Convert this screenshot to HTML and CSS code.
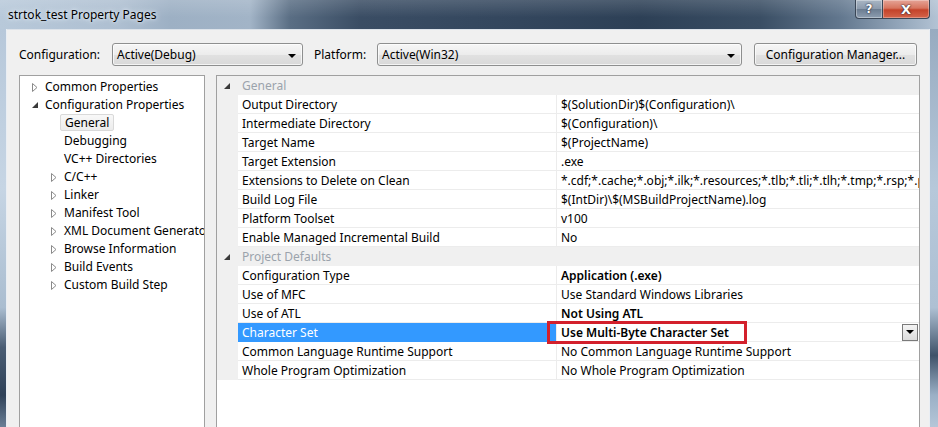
FILE: index.html
```html
<!DOCTYPE html>
<html>
<head>
<meta charset="utf-8">
<title>strtok_test Property Pages</title>
<link rel="stylesheet" href="styles.css">
</head>
<body>
<div class="window">
  <div class="titlebar">
    <span class="title">strtok_test Property Pages</span>
    <div class="caption">
      <span class="cap help">?</span>
      <span class="cap close">X</span>
    </div>
  </div>
  <div class="frame">
    <div class="edge edge-left"></div>
    <div class="client">
      <div class="config-row">
        <span class="lbl lbl-config">Configuration:</span>
        <div class="combo combo-config"><span>Active(Debug)</span><i class="dd"></i></div>
        <span class="lbl lbl-platform">Platform:</span>
        <div class="combo combo-platform"><span>Active(Win32)</span><i class="dd"></i></div>
        <div class="btn">Configuration Manager...</div>
      </div>
      <div class="panels">
        <div class="tree">
          <div class="node l1"><i class="tw"><svg width="6" height="9" viewBox="0 0 6 9"><polygon points="0.5,0.5 5,4.5 0.5,8.5" fill="#fff" stroke="#8a8a8a" stroke-width="1"/></svg></i><span>Common Properties</span></div>
          <div class="node l1"><i class="tw"><svg width="6" height="6" viewBox="0 0 6 6"><polygon points="6,0 6,6 0,6" fill="#3a3a3a"/></svg></i><span>Configuration Properties</span></div>
          <div class="node l2"><i class="tw"></i><span class="sel">General</span></div>
          <div class="node l2"><i class="tw"></i><span>Debugging</span></div>
          <div class="node l2"><i class="tw"></i><span>VC++ Directories</span></div>
          <div class="node l2"><i class="tw"><svg width="6" height="9" viewBox="0 0 6 9"><polygon points="0.5,0.5 5,4.5 0.5,8.5" fill="#fff" stroke="#8a8a8a" stroke-width="1"/></svg></i><span>C/C++</span></div>
          <div class="node l2"><i class="tw"><svg width="6" height="9" viewBox="0 0 6 9"><polygon points="0.5,0.5 5,4.5 0.5,8.5" fill="#fff" stroke="#8a8a8a" stroke-width="1"/></svg></i><span>Linker</span></div>
          <div class="node l2"><i class="tw"><svg width="6" height="9" viewBox="0 0 6 9"><polygon points="0.5,0.5 5,4.5 0.5,8.5" fill="#fff" stroke="#8a8a8a" stroke-width="1"/></svg></i><span>Manifest Tool</span></div>
          <div class="node l2"><i class="tw"><svg width="6" height="9" viewBox="0 0 6 9"><polygon points="0.5,0.5 5,4.5 0.5,8.5" fill="#fff" stroke="#8a8a8a" stroke-width="1"/></svg></i><span>XML Document Generator</span></div>
          <div class="node l2"><i class="tw"><svg width="6" height="9" viewBox="0 0 6 9"><polygon points="0.5,0.5 5,4.5 0.5,8.5" fill="#fff" stroke="#8a8a8a" stroke-width="1"/></svg></i><span>Browse Information</span></div>
          <div class="node l2"><i class="tw"><svg width="6" height="9" viewBox="0 0 6 9"><polygon points="0.5,0.5 5,4.5 0.5,8.5" fill="#fff" stroke="#8a8a8a" stroke-width="1"/></svg></i><span>Build Events</span></div>
          <div class="node l2"><i class="tw"><svg width="6" height="9" viewBox="0 0 6 9"><polygon points="0.5,0.5 5,4.5 0.5,8.5" fill="#fff" stroke="#8a8a8a" stroke-width="1"/></svg></i><span>Custom Build Step</span></div>
        </div>
        <div class="grid">
          <div class="row cat"><div class="margin"><svg width="6" height="6" viewBox="0 0 6 6"><polygon points="6,0 6,6 0,6" fill="#3a3a3a"/></svg></div><div class="catname">General</div></div>
          <div class="row"><div class="margin"></div><div class="name">Output Directory</div><div class="val">$(SolutionDir)$(Configuration)\</div></div>
          <div class="row"><div class="margin"></div><div class="name">Intermediate Directory</div><div class="val">$(Configuration)\</div></div>
          <div class="row"><div class="margin"></div><div class="name">Target Name</div><div class="val">$(ProjectName)</div></div>
          <div class="row"><div class="margin"></div><div class="name">Target Extension</div><div class="val">.exe</div></div>
          <div class="row"><div class="margin"></div><div class="name">Extensions to Delete on Clean</div><div class="val">*.cdf;*.cache;*.obj;*.ilk;*.resources;*.tlb;*.tli;*.tlh;*.tmp;*.rsp;*.pgc;</div></div>
          <div class="row"><div class="margin"></div><div class="name">Build Log File</div><div class="val">$(IntDir)\$(MSBuildProjectName).log</div></div>
          <div class="row"><div class="margin"></div><div class="name">Platform Toolset</div><div class="val">v100</div></div>
          <div class="row"><div class="margin"></div><div class="name">Enable Managed Incremental Build</div><div class="val">No</div></div>
          <div class="row cat"><div class="margin"><svg width="6" height="6" viewBox="0 0 6 6"><polygon points="6,0 6,6 0,6" fill="#3a3a3a"/></svg></div><div class="catname">Project Defaults</div></div>
          <div class="row"><div class="margin"></div><div class="name">Configuration Type</div><div class="val b">Application (.exe)</div></div>
          <div class="row"><div class="margin"></div><div class="name">Use of MFC</div><div class="val">Use Standard Windows Libraries</div></div>
          <div class="row"><div class="margin"></div><div class="name">Use of ATL</div><div class="val b">Not Using ATL</div></div>
          <div class="row selected"><div class="margin"></div><div class="name">Character Set</div><div class="val b"><span>Use Multi-Byte Character Set</span><i class="mark"></i><i class="ddbtn"></i></div></div>
          <div class="row"><div class="margin"></div><div class="name">Common Language Runtime Support</div><div class="val">No Common Language Runtime Support</div></div>
          <div class="row"><div class="margin"></div><div class="name">Whole Program Optimization</div><div class="val">No Whole Program Optimization</div></div>
        </div>
      </div>
    </div>
    <div class="edge edge-right"></div>
  </div>
</div>
</body>
</html>
```

FILE: styles.css
```css
* { box-sizing: border-box; }
html, body { margin: 0; padding: 0; }
body {
  width: 938px;
  height: 427px;
  overflow: hidden;
  font-family: "Noto Sans", "Open Sans", sans-serif;
  font-size: 12px;
  color: #000;
}
.window {
  width: 938px;
  height: 427px;
  display: flex;
  flex-direction: column;
  background: #3f5269;
}
.titlebar {
  height: 29px;
  flex: none;
  display: flex;
  align-items: flex-start;
  background:
    linear-gradient(to bottom, rgba(255,255,255,0.15), rgba(255,255,255,0) 60%),
    linear-gradient(to right, #b8c9da 0px, #aebfd1 120px, #9db0c4 170px, #a2b4c7 250px, #5a6e84 290px, #3a4d64 360px, #33465d 520px, #2d4056 640px, #3a4e64 760px, #62778e 840px, #93a6ba 900px, #b3c3d4 938px);
}
.title {
  padding: 7px 0 0 8px;
  font-size: 12px;
  line-height: 16px;
  color: #000;
  text-shadow: 0 0 6px #e6eef6, 0 0 3px #e6eef6;
}
.caption {
  margin-left: auto;
  margin-right: 8px;
  display: flex;
  height: 19px;
}
.cap {
  display: flex;
  align-items: center;
  justify-content: center;
  height: 19px;
  color: #fff;
  font-family: "DejaVu Sans", sans-serif;
  font-weight: bold;
  font-size: 12px;
  border: 1px solid #3a4656;
  border-top: none;
  text-shadow: 0 0 2px #223, 0 0 1px #223;
}
.help {
  width: 28px;
  border-radius: 0 0 0 4px;
  background: linear-gradient(to bottom, #a9b6c4 0%, #8c9bad 48%, #6c7d91 52%, #8d9db0 100%);
  box-shadow: inset 0 0 0 1px rgba(255,255,255,0.35);
}
.close {
  width: 47px;
  border-left: none;
  border-radius: 0 0 4px 0;
  background: linear-gradient(to bottom, #e5a497 0%, #d7755f 45%, #c4432a 55%, #d4644a 100%);
  box-shadow: inset 0 0 0 1px rgba(255,255,255,0.3);
  font-size: 13px;
}
.frame {
  flex: 1;
  display: flex;
  min-height: 0;
}
.edge { flex: none; }
.edge-left {
  width: 7px;
  background: linear-gradient(to bottom, #b7c8da 0%, #c6d5e4 40%, #aabdd0 70%, #4a5d74 80%, #2f4158 92%, #6a7f96 100%);
  border-right: 1px solid #e9eef4;
}
.edge-right {
  width: 9px;
  background: linear-gradient(to bottom, #98abc0 0%, #b6c8da 40%, #aec0d3 70%, #3f5269 82%, #9bb0c6 92%, #b5c6d8 100%);
  border-left: 1px solid #e9eef4;
}
.client {
  width: 922px;
  flex: none;
  background: #f0f0f0;
  border-top: 1px solid #dde3ea;
  padding: 13px 0 0 12px;
}
.config-row {
  display: flex;
  align-items: center;
  height: 23px;
}
.lbl {
  flex: none;
  line-height: 23px;
}
.lbl-config { width: 93px; }
.lbl-platform { width: 63px; margin-left: 11px; }
.combo, .btn {
  flex: none;
  height: 23px;
  border: 1px solid #8e8f8f;
  border-radius: 3px;
  background: linear-gradient(to bottom, #f6f6f6 0%, #ececec 50%, #e1e1e1 51%, #d9d9d9 100%);
  box-shadow: inset 0 0 0 1px rgba(255,255,255,0.7);
}
.combo {
  display: flex;
  align-items: center;
  padding: 0 0 0 4px;
}
.combo span { flex: 1; }
.combo-config { width: 191px; }
.combo-platform { width: 365px; }
.dd {
  width: 0;
  height: 0;
  border-left: 4px solid transparent;
  border-right: 4px solid transparent;
  border-top: 4px solid #000;
  margin: 2px 6px 0 0;
}
.btn {
  width: 163px;
  margin-left: 12px;
  display: flex;
  align-items: center;
  justify-content: center;
}
.panels {
  display: flex;
  margin-top: 9px;
  gap: 11px;
}
.tree {
  width: 186px;
  height: 360px;
  flex: none;
  background: #fff;
  border: 1px solid #a0a0a0;
  padding-top: 1px;
  overflow: hidden;
}
.node {
  display: flex;
  align-items: center;
  height: 18px;
  white-space: nowrap;
}
.node.l1 { padding-left: 12px; }
.node.l2 { padding-left: 31px; }
.node .tw {
  width: 13px;
  flex: none;
  height: 18px;
  display: flex;
  align-items: center;
  padding-top: 2px;
}
.node .tw svg { display: block; }
.node .sel {
  margin-left: -4px;
  padding: 0 4px 0 4px;
  height: 17px;
  line-height: 15px;
  border: 1px solid #d9d9d9;
  border-radius: 2px;
  background: linear-gradient(to bottom, #f8f8f8, #ececec);
}
.grid {
  width: 704px;
  height: 360px;
  flex: none;
  background: #fff;
  border: 1px solid #a0a0a0;
}
.row {
  display: flex;
  height: 19px;
}
.margin {
  width: 21px;
  flex: none;
  background: #f0f0f0;
  display: flex;
  align-items: center;
  justify-content: center;
}
.margin svg { display: block; margin-left: -2px; }
.name {
  width: 318px;
  flex: none;
  padding: 1px 0 0 4px;
  line-height: 17px;
  border-bottom: 1px solid #ececec;
  white-space: nowrap;
  overflow: hidden;
}
.val {
  flex: 1;
  min-width: 0;
  padding: 1px 0 0 4px;
  line-height: 17px;
  border-bottom: 1px solid #ececec;
  border-left: 1px solid #ececec;
  white-space: nowrap;
  overflow: hidden;
}
.val.b { font-weight: 600; }
.cat { background: #f0f0f0; }
.catname {
  flex: 1;
  padding: 1px 0 0 4px;
  line-height: 18px;
  color: #9ba3ac;
}
.selected .name {
  background: #3399ff;
  color: #fff;
  border-bottom-color: #3399ff;
}
.selected .val {
  position: relative;
  overflow: visible;
  display: flex;
  align-items: center;
  padding-top: 0;
}
.selected .val span { flex: 1; padding-top: 1px; }
.mark {
  position: absolute;
  left: -10px;
  top: -2px;
  width: 200px;
  height: 23px;
  border: 3px solid #d3202c;
}
.ddbtn {
  width: 16px;
  height: 17px;
  margin-right: 1px;
  border: 1px solid #7a7a7a;
  background: linear-gradient(to bottom, #f4f4f4, #dcdcdc);
  display: flex;
  align-items: center;
  justify-content: center;
}
.ddbtn::before {
  content: "";
  width: 0;
  height: 0;
  border-left: 4px solid transparent;
  border-right: 4px solid transparent;
  border-top: 4px solid #000;
}
```
